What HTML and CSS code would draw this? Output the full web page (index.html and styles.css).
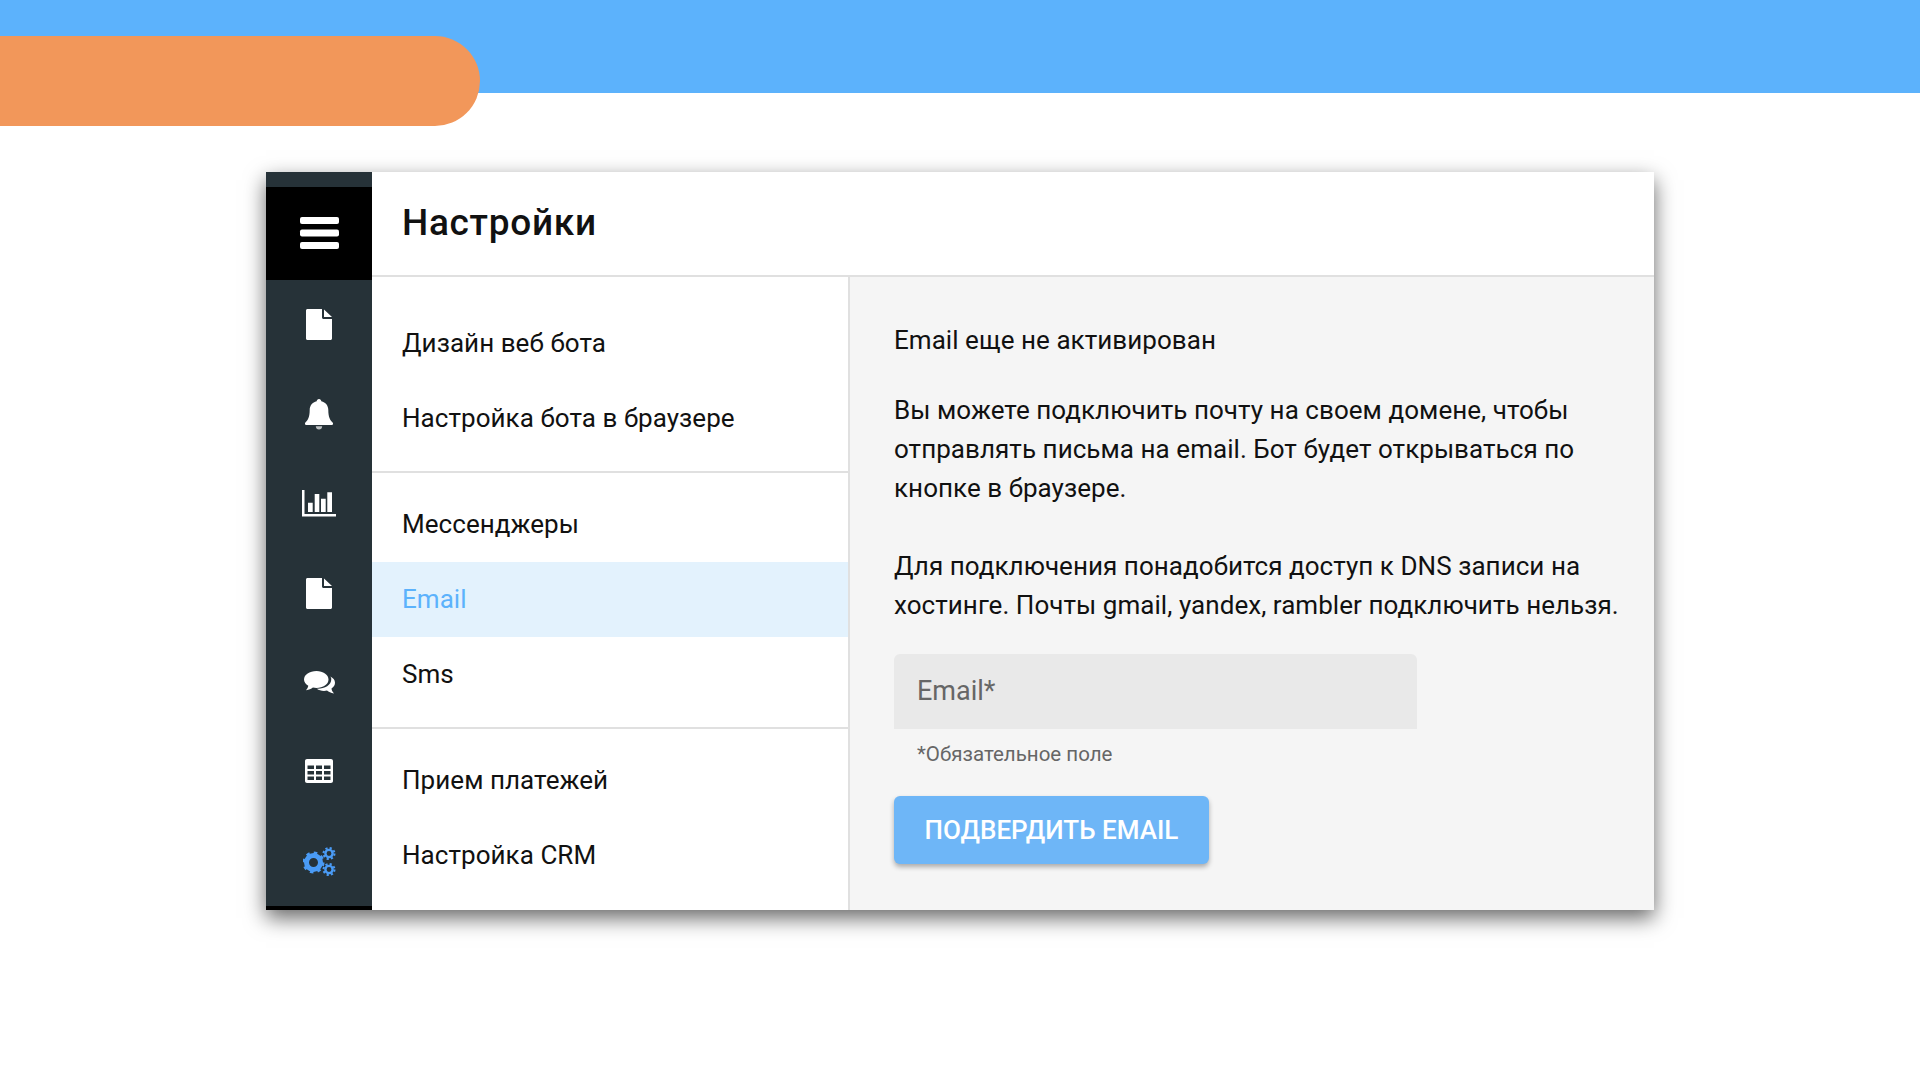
FILE: index.html
```html
<!DOCTYPE html>
<html lang="ru">
<head>
    <meta charset="UTF-8">
    <title>Настройки</title>
    <link rel="stylesheet" href="styles.css">
</head>
<body>
    <div class="banner"><div class="pill"></div></div>
    <div class="window">
        <div class="sidebar">
            <div class="menu-btn">
                <svg width="40" height="34" viewBox="0 0 40 34"><rect x="1" y="0" width="39" height="7" rx="2"/><rect x="1" y="12.500" width="39" height="7" rx="2"/><rect x="1" y="25" width="39" height="7" rx="2"/></svg>
            </div>
            <div class="icons">
                <div class="icon">
                    <svg width="26" height="31" viewBox="0 0 26 31"><path d="M1.500 0H16v8.500c0 .8.700 1.500 1.500 1.500H26v19.500c0 .8-.7 1.500-1.500 1.500h-23C.7 31 0 30.300 0 29.500v-28C0 .7.700 0 1.500 0zM18 .5l8 7.500h-8z"/></svg>
                </div>
                <div class="icon">
                    <svg width="28" height="31" viewBox="0 0 28 31"><path d="M14 0c1.300 0 2.300 1 2.300 2.300 4.300 1 7 4.300 7 8.700 0 7 1.700 10 4.700 13 .4.800 0 2-1.200 2H1.200C0 26-.4 24.800 0 24c3-3 4.700-6 4.700-13 0-4.400 2.700-7.700 7-8.700C11.700 1 12.700 0 14 0z"/><path d="M10.800 27.200h6.400c0 2-1.400 3.300-3.200 3.300s-3.200-1.300-3.200-3.300z" opacity=".7"/></svg>
                </div>
                <div class="icon">
                    <svg width="34" height="27" viewBox="0 0 34 27"><path d="M0 0h2.500v24h31.500v2.500H0z"/><path d="M6 12.700h4.700V22H6zM12.700 4h4.600v18h-4.600zM19 8.700h4.700V22H19zM25.300 2.300H30V22h-4.700z"/></svg>
                </div>
                <div class="icon">
                    <svg width="26" height="31" viewBox="0 0 26 31"><path d="M1.500 0H16v8.500c0 .8.700 1.500 1.500 1.500H26v19.500c0 .8-.7 1.500-1.500 1.500h-23C.7 31 0 30.300 0 29.500v-28C0 .7.700 0 1.500 0zM18 .5l8 7.500h-8z"/></svg>
                </div>
                <div class="icon icon-chat">
                    <svg width="31" height="25" viewBox="0 0 31 25"><path d="M12.500 0C19 0 24.500 3.600 24.500 8.500S19 17 12.500 17c-1.300 0-2.500-.1-3.600-.4C7.200 18 5 19 2 19.300c1-1.200 2-2.600 2.300-4.500C1.700 13.300 0 11 0 8.500 0 3.600 5.500 0 12.500 0z"/><path d="M26.300 5.500c2.800 1.300 4.700 3.600 4.700 6.300 0 2.300-1.300 4.300-3.500 5.700.2 2 1.200 3.400 2.500 4.900-3-.3-5.300-1.300-7-2.800-1 .2-2 .3-3 .3-2.800 0-5.400-.8-7.200-2.200 7.500.3 14.500-3.200 14.500-9.700 0-.9-.3-1.700-1-2.500z"/></svg>
                </div>
                <div class="icon icon-table">
                    <svg width="28" height="24" viewBox="0 0 28 24"><path fill-rule="evenodd" d="M2 0h24c1.100 0 2 .9 2 2v20c0 1.100-.9 2-2 2H2c-1.100 0-2-.9-2-2V2C0 .9.900 0 2 0zm.5 6.500v3.500h6.500V6.500zm8.500 0v3.500h6V6.500zm8 0v3.500h6.500V6.500zM2.500 12v3.500h6.500V12zm8.500 0v3.500h6V12zm8 0v3.500h6.500V12zM2.500 17.500V21h6.500v-3.500zm8.500 0V21h6v-3.500zm8 0V21h6.500v-3.500z"/></svg>
                </div>
                <div class="icon icon-active">
                    <svg width="33" height="30" viewBox="0 0 33 30">
                        <circle cx="10.500" cy="15.500" r="7" fill="none" stroke="currentColor" stroke-width="5"/>
                        <circle cx="10.500" cy="15.500" r="9.500" fill="none" stroke="currentColor" stroke-width="3" stroke-dasharray="3.400 4.060"/>
                        <circle cx="26" cy="6.500" r="3.600" fill="none" stroke="currentColor" stroke-width="2.400"/>
                        <circle cx="26" cy="6.500" r="5.500" fill="none" stroke="currentColor" stroke-width="2" stroke-dasharray="2.160 2.160"/>
                        <circle cx="26" cy="22.500" r="3.600" fill="none" stroke="currentColor" stroke-width="2.400"/>
                        <circle cx="26" cy="22.500" r="5.500" fill="none" stroke="currentColor" stroke-width="2" stroke-dasharray="2.160 2.160"/>
                    </svg>
                </div>
            </div>
        </div>
        <div class="main">
            <div class="topbar"><h1 class="title">Настройки</h1></div>
            <div class="columns">
                <div class="nav">
                    <div class="nav-group">
                        <div class="nav-item">Дизайн веб бота</div>
                        <div class="nav-item">Настройка бота в браузере</div>
                    </div>
                    <div class="nav-group">
                        <div class="nav-item">Мессенджеры</div>
                        <div class="nav-item active">Email</div>
                        <div class="nav-item">Sms</div>
                    </div>
                    <div class="nav-group">
                        <div class="nav-item">Прием платежей</div>
                        <div class="nav-item">Настройка CRM</div>
                    </div>
                </div>
                <div class="content">
                    <p class="status">Email еще не активирован</p>
                    <p class="text">Вы можете подключить почту на своем домене, чтобы отправлять письма на email. Бот будет открываться по кнопке в браузере.</p>
                    <p class="text">Для подключения понадобится доступ к DNS записи на хостинге. Почты gmail, yandex, rambler подключить нельзя.</p>
                    <div class="field">Email*</div>
                    <div class="hint">*Обязательное поле</div>
                    <button class="submit-btn">Подвердить email</button>
                </div>
            </div>
        </div>
    </div>
</body>
</html>
```

FILE: styles.css
```css
* { box-sizing: border-box; margin: 0; padding: 0; }
body {
    font-family: Roboto, 'Liberation Sans', sans-serif;
    background-color: #ffffff;
    color: #111;
    height: 1080px;
    overflow: hidden;
}
.banner {
    background-color: #5cb2fc;
    height: 93px;
    position: relative;
}
.pill {
    position: absolute;
    left: 0;
    top: 36px;
    width: 480px;
    height: 90px;
    background-color: #f2975a;
    border-radius: 0 45px 45px 0;
}
.window {
    display: flex;
    width: 1388px;
    height: 738px;
    margin: 79px 0 0 266px;
    box-shadow: 0 8px 20px rgba(0, 0, 0, 0.6);
}
.sidebar {
    width: 106px;
    background-color: #263238;
    padding-top: 15px;
    border-bottom: 4px solid #000;
    flex-shrink: 0;
}
.menu-btn {
    height: 93px;
    background-color: #000;
    display: flex;
    align-items: center;
    justify-content: center;
    fill: #fff;
}
.icon {
    height: 89.500px;
    display: flex;
    align-items: center;
    justify-content: center;
    fill: #fff;
}
.icon-chat svg {
    margin-top: 2px;
}
.icon-table svg {
    margin-bottom: 3px;
}
.icon-active {
    color: #4a9bf5;
    fill: #4a9bf5;
}
.main {
    flex: 1;
    display: flex;
    flex-direction: column;
    background-color: #fff;
}
.topbar {
    height: 105px;
    border-bottom: 2px solid #e0e0e0;
    padding: 0 0 2px 30px;
    display: flex;
    align-items: center;
}
.title {
    font-size: 37px;
    font-weight: 500;
    letter-spacing: 0.7px;
}
.columns {
    flex: 1;
    display: flex;
    min-height: 0;
}
.nav {
    width: 478px;
    border-right: 2px solid #e0e0e0;
    padding-top: 29px;
}
.nav-group {
    padding-bottom: 15px;
    border-bottom: 2px solid #e0e0e0;
    margin-bottom: 14px;
}
.nav-group:last-child {
    border-bottom: none;
}
.nav-item {
    height: 75px;
    line-height: 75px;
    padding-left: 30px;
    font-size: 26px;
    letter-spacing: 0.05px;
}
.nav-item.active {
    background-color: #e3f2fd;
    color: #5cb2fc;
}
.content {
    flex: 1;
    background-color: #f5f5f5;
    padding: 47px 30px 0 44px;
}
.status {
    font-size: 26px;
    line-height: 32px;
    letter-spacing: 0.05px;
    margin-bottom: 35px;
}
.text {
    font-size: 26px;
    line-height: 39px;
    letter-spacing: 0.05px;
    margin-bottom: 39px;
}
.field {
    width: 523px;
    height: 75px;
    margin-top: -10px;
    background-color: #e9e9e9;
    border-radius: 6px 6px 0 0;
    color: #666;
    font-size: 27px;
    line-height: 74px;
    padding-left: 23px;
}
.hint {
    font-size: 20.500px;
    color: #666;
    padding-left: 23px;
    margin-top: 12px;
    line-height: 26px;
}
.submit-btn {
    display: block;
    width: 315px;
    height: 68px;
    margin-top: 29px;
    border: none;
    border-radius: 6px;
    background-color: #6eb6f7;
    color: #fff;
    font-family: inherit;
    font-size: 26px;
    font-weight: 500;
    text-transform: uppercase;
    box-shadow: 0 3px 5px rgba(0, 0, 0, 0.3);
}
```
